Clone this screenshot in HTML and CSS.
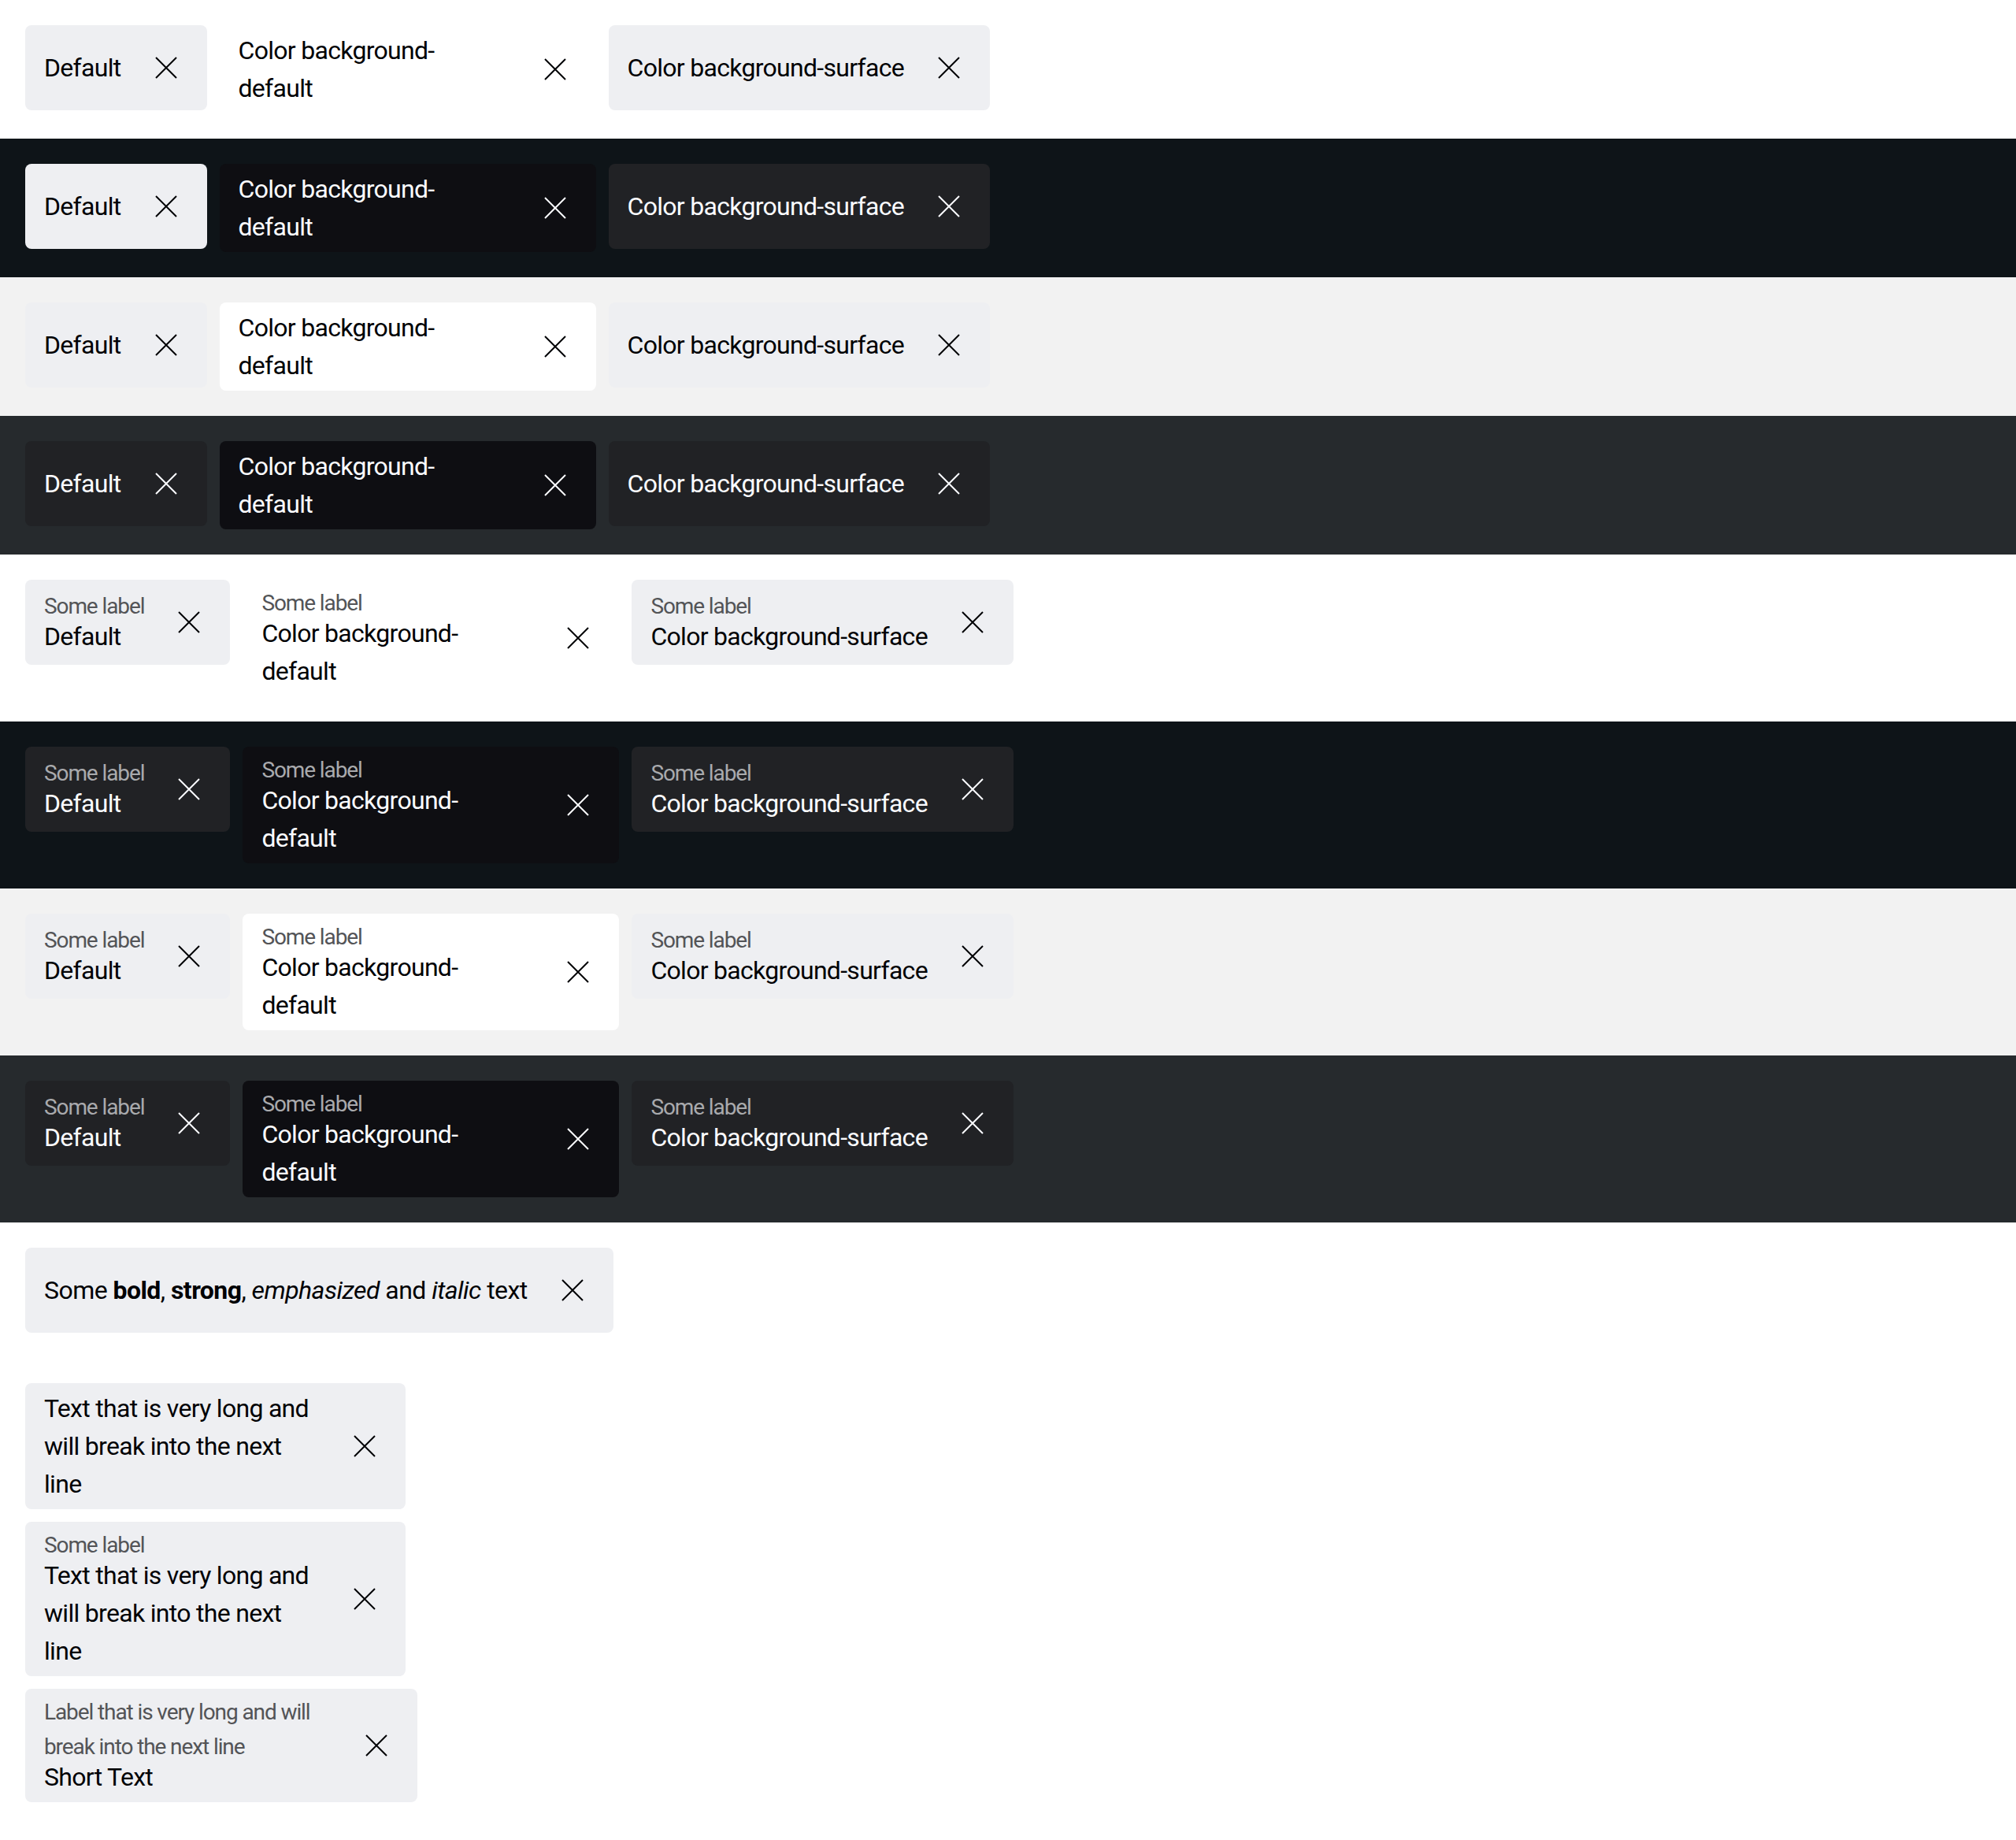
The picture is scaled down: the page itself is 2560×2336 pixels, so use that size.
FILE: index.html
```html
<!DOCTYPE html>
<html lang="en">
<head>
<meta charset="utf-8">
<title>Tag dismissible</title>
<link rel="stylesheet" href="styles.css">
</head>
<body>
<main class="page">
  <section class="band band-white">
    <div class="tag light surface"><div class="tag-text"><span class="main">Default</span></div><svg class="close" viewBox="0 0 28 28"><path d="M1 1L27 27M27 1L1 27"/></svg></div>
    <div class="tag light base"><div class="tag-text w345"><span class="main">Color background-default</span></div><svg class="close" viewBox="0 0 28 28"><path d="M1 1L27 27M27 1L1 27"/></svg></div>
    <div class="tag light surface"><div class="tag-text"><span class="main">Color background-surface</span></div><svg class="close" viewBox="0 0 28 28"><path d="M1 1L27 27M27 1L1 27"/></svg></div>
  </section>
  <section class="band band-dark">
    <div class="tag light surface"><div class="tag-text"><span class="main">Default</span></div><svg class="close" viewBox="0 0 28 28"><path d="M1 1L27 27M27 1L1 27"/></svg></div>
    <div class="tag dark base"><div class="tag-text w345"><span class="main">Color background-default</span></div><svg class="close" viewBox="0 0 28 28"><path d="M1 1L27 27M27 1L1 27"/></svg></div>
    <div class="tag dark surface"><div class="tag-text"><span class="main">Color background-surface</span></div><svg class="close" viewBox="0 0 28 28"><path d="M1 1L27 27M27 1L1 27"/></svg></div>
  </section>
  <section class="band band-grey">
    <div class="tag light surface"><div class="tag-text"><span class="main">Default</span></div><svg class="close" viewBox="0 0 28 28"><path d="M1 1L27 27M27 1L1 27"/></svg></div>
    <div class="tag light base"><div class="tag-text w345"><span class="main">Color background-default</span></div><svg class="close" viewBox="0 0 28 28"><path d="M1 1L27 27M27 1L1 27"/></svg></div>
    <div class="tag light surface"><div class="tag-text"><span class="main">Color background-surface</span></div><svg class="close" viewBox="0 0 28 28"><path d="M1 1L27 27M27 1L1 27"/></svg></div>
  </section>
  <section class="band band-darkgrey">
    <div class="tag dark surface"><div class="tag-text"><span class="main">Default</span></div><svg class="close" viewBox="0 0 28 28"><path d="M1 1L27 27M27 1L1 27"/></svg></div>
    <div class="tag dark base"><div class="tag-text w345"><span class="main">Color background-default</span></div><svg class="close" viewBox="0 0 28 28"><path d="M1 1L27 27M27 1L1 27"/></svg></div>
    <div class="tag dark surface"><div class="tag-text"><span class="main">Color background-surface</span></div><svg class="close" viewBox="0 0 28 28"><path d="M1 1L27 27M27 1L1 27"/></svg></div>
  </section>

  <section class="band band-white">
    <div class="tag light surface"><div class="tag-text"><span class="label">Some label</span><span class="main">Default</span></div><svg class="close" viewBox="0 0 28 28"><path d="M1 1L27 27M27 1L1 27"/></svg></div>
    <div class="tag light base"><div class="tag-text w345"><span class="label">Some label</span><span class="main">Color background-default</span></div><svg class="close" viewBox="0 0 28 28"><path d="M1 1L27 27M27 1L1 27"/></svg></div>
    <div class="tag light surface"><div class="tag-text"><span class="label">Some label</span><span class="main">Color background-surface</span></div><svg class="close" viewBox="0 0 28 28"><path d="M1 1L27 27M27 1L1 27"/></svg></div>
  </section>
  <section class="band band-dark">
    <div class="tag dark surface"><div class="tag-text"><span class="label">Some label</span><span class="main">Default</span></div><svg class="close" viewBox="0 0 28 28"><path d="M1 1L27 27M27 1L1 27"/></svg></div>
    <div class="tag dark base"><div class="tag-text w345"><span class="label">Some label</span><span class="main">Color background-default</span></div><svg class="close" viewBox="0 0 28 28"><path d="M1 1L27 27M27 1L1 27"/></svg></div>
    <div class="tag dark surface"><div class="tag-text"><span class="label">Some label</span><span class="main">Color background-surface</span></div><svg class="close" viewBox="0 0 28 28"><path d="M1 1L27 27M27 1L1 27"/></svg></div>
  </section>
  <section class="band band-grey">
    <div class="tag light surface"><div class="tag-text"><span class="label">Some label</span><span class="main">Default</span></div><svg class="close" viewBox="0 0 28 28"><path d="M1 1L27 27M27 1L1 27"/></svg></div>
    <div class="tag light base"><div class="tag-text w345"><span class="label">Some label</span><span class="main">Color background-default</span></div><svg class="close" viewBox="0 0 28 28"><path d="M1 1L27 27M27 1L1 27"/></svg></div>
    <div class="tag light surface"><div class="tag-text"><span class="label">Some label</span><span class="main">Color background-surface</span></div><svg class="close" viewBox="0 0 28 28"><path d="M1 1L27 27M27 1L1 27"/></svg></div>
  </section>
  <section class="band band-darkgrey">
    <div class="tag dark surface"><div class="tag-text"><span class="label">Some label</span><span class="main">Default</span></div><svg class="close" viewBox="0 0 28 28"><path d="M1 1L27 27M27 1L1 27"/></svg></div>
    <div class="tag dark base"><div class="tag-text w345"><span class="label">Some label</span><span class="main">Color background-default</span></div><svg class="close" viewBox="0 0 28 28"><path d="M1 1L27 27M27 1L1 27"/></svg></div>
    <div class="tag dark surface"><div class="tag-text"><span class="label">Some label</span><span class="main">Color background-surface</span></div><svg class="close" viewBox="0 0 28 28"><path d="M1 1L27 27M27 1L1 27"/></svg></div>
  </section>

  <section class="band band-white">
    <div class="tag light surface"><div class="tag-text"><span class="main mixed">Some <b>bold</b>, <strong>strong</strong>, <em>emphasized</em> and <i>italic</i> text</span></div><svg class="close" viewBox="0 0 28 28"><path d="M1 1L27 27M27 1L1 27"/></svg></div>
  </section>

  <section class="band band-white band-stack">
    <div class="tag light surface"><div class="tag-text w350"><span class="main">Text that is very long and will break into the next line</span></div><svg class="close" viewBox="0 0 28 28"><path d="M1 1L27 27M27 1L1 27"/></svg></div>
    <div class="tag light surface"><div class="tag-text w350"><span class="label">Some label</span><span class="main">Text that is very long and will break into the next line</span></div><svg class="close" viewBox="0 0 28 28"><path d="M1 1L27 27M27 1L1 27"/></svg></div>
    <div class="tag light surface"><div class="tag-text w365"><span class="label">Label that is very long and will break into the next line</span><span class="main">Short Text</span></div><svg class="close" viewBox="0 0 28 28"><path d="M1 1L27 27M27 1L1 27"/></svg></div>
  </section>
</main>
</body>
</html>
```

FILE: styles.css
```css
* { box-sizing: border-box; }

html, body {
  margin: 0;
  padding: 0;
  background: #ffffff;
}

body {
  font-family: Roboto, "Liberation Sans", sans-serif;
  -webkit-font-smoothing: antialiased;
}

.page {
  display: flex;
  flex-direction: column;
}

.band {
  display: flex;
  align-items: flex-start;
  gap: 16px;
  padding: 32px;
}

.band-stack {
  flex-direction: column;
}

.band-white { background: #ffffff; }
.band-dark { background: #0e1418; }
.band-grey { background: #f2f2f2; }
.band-darkgrey { background: #262a2d; }

.tag {
  display: flex;
  align-items: center;
  min-height: 108px;
  padding: 8px 38px 8px 24px;
  border-radius: 8px;
  flex: none;
}

.tag.light { color: #010205; }
.tag.dark { color: #fbfcff; }
.tag.light.surface { background: #eeeff2; }
.tag.light.base { background: #ffffff; }
.tag.dark.surface { background: #212225; }
.tag.dark.base { background: #0e0e12; }

.tag-text {
  display: flex;
  flex-direction: column;
  align-items: flex-start;
}

.w345 { width: 345px; }
.w345 .main { max-width: 310px; }
.w350 { width: 350px; }
.w365 { width: 365px; }

.label {
  font-size: 28px;
  line-height: 44px;
  margin-bottom: -8px;
  letter-spacing: -1.1px;
}

.tag.light .label { color: #535457; }
.tag.dark .label { color: #a9aaad; }

.main {
  font-size: 32px;
  line-height: 48px;
  letter-spacing: -0.7px;
}

.main.mixed { letter-spacing: -0.55px; }

.main b, .main strong { font-weight: 700; }

.close {
  width: 28px;
  height: 28px;
  flex: none;
  margin-left: 43px;
  fill: none;
  stroke: currentColor;
  stroke-width: 2;
}
```
